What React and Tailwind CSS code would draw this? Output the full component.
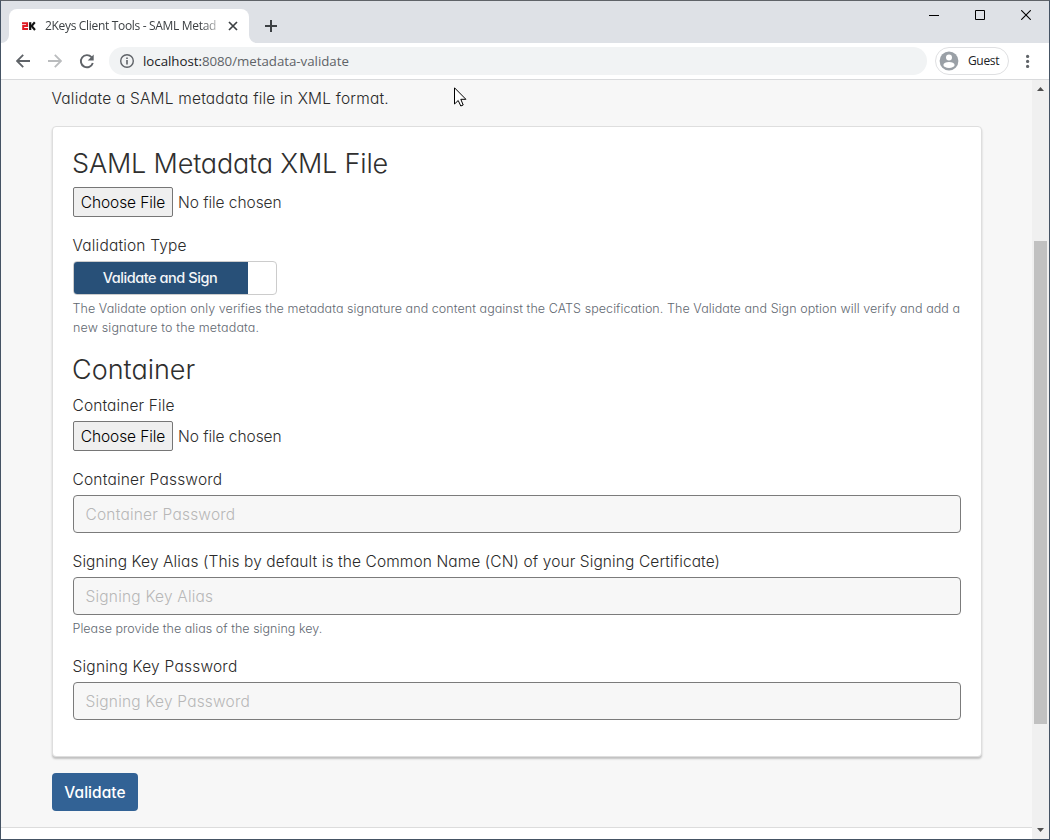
import React from "react";

const muli = "font-['Inter','Open_Sans',sans-serif] [font-feature-settings:'cv11'_1] font-light";

function Label({ children, className = "tracking-[0.19px]" }) {
  return (
    <label className={`block h-6 w-max whitespace-nowrap text-[15.5px] leading-6 -indent-[0.5px] text-[#2a2a2a] ${className}`}>
      {children}
    </label>
  );
}

function FilePicker({ className = "" }) {
  return (
    <div className={`flex h-[30px] items-center ${className}`}>
      <button className="h-[30px] w-[100px] rounded-[2px] border border-[#767676] bg-[#efefef] text-black">
        <span className="whitespace-nowrap text-[15.5px] tracking-[-0.1px]">Choose File</span>
      </button>
      <span className="ml-[5px] whitespace-nowrap pt-[2px] text-[15.5px] tracking-[-0.05px] text-[#2f2f2f]">No file chosen</span>
    </div>
  );
}

function Field({ placeholder }) {
  return (
    <div className="mt-[3px] flex h-[38px] items-center rounded border border-[#7b7b7b] bg-[#f7f7f7] pl-3">
      <span className="whitespace-nowrap pt-[2px] text-[15.5px] -indent-[0.5px] tracking-[0.2px] text-[#b8b8b8]">{placeholder}</span>
    </div>
  );
}

function TabStrip() {
  return (
    <div className="flex h-[42px] items-end justify-between bg-[#dee1e6]">
      <div className="flex h-[34px] items-end">
        <svg width="8" height="8" viewBox="0 0 8 8"><path d="M0 8A8 8 0 0 0 8 0V8Z" fill="#fff" /></svg>
        <div className="flex h-[34px] w-[240px] items-center rounded-t-lg bg-white pl-3">
          <svg width="16" height="16" viewBox="0 0 16 16" fill="none" className="shrink-0">
            <path d="M1 5.2H6.1V8H2.2V11.1H7" stroke="#e01b24" strokeWidth="2" />
            <path d="M9.2 4.2V12" stroke="#111" strokeWidth="2.2" />
            <path d="M13.8 4.2L10.6 8L14 12" stroke="#111" strokeWidth="2.1" />
          </svg>
          <span className="ml-2 w-[174px] overflow-hidden whitespace-nowrap font-['Open_Sans',sans-serif] text-[12px] leading-4 tracking-[-0.32px] text-[#3c4043] [mask-image:linear-gradient(to_right,black_156px,transparent_180px)]">
            2Keys Client Tools - SAML Metad
          </span>
          <svg width="10" height="10" viewBox="0 0 10 10" className="ml-[9px] shrink-0" stroke="#3c4043" strokeWidth="1.7">
            <path d="M1 1L9 9M9 1L1 9" />
          </svg>
        </div>
        <svg width="8" height="8" viewBox="0 0 8 8"><path d="M8 8A8 8 0 0 1 0 0V8Z" fill="#fff" /></svg>
        <svg width="12" height="12" viewBox="0 0 12 12" className="mb-[11px] ml-2" stroke="#3c4043" strokeWidth="2">
          <path d="M6 0V12M0 6H12" />
        </svg>
      </div>
      <div className="flex h-[42px] items-start gap-9 pr-[18px] pt-[9px]">
        <svg width="10" height="10" viewBox="0 0 10 10" stroke="#000"><path d="M0 5.5H10" /></svg>
        <svg width="10" height="10" viewBox="0 0 10 10" stroke="#000" fill="none"><path d="M.5 .5H9.5V9.5H.5Z" /></svg>
        <svg width="10" height="10" viewBox="0 0 10 10" stroke="#000" strokeWidth="1.1"><path d="M.2 .2L9.8 9.8M9.8 .2L.2 9.8" /></svg>
      </div>
    </div>
  );
}

function Toolbar() {
  return (
    <div className="flex h-[37px] items-center border-b border-[#d9dadc] bg-white pl-[15px] font-['Open_Sans',sans-serif]">
      <svg width="14" height="14" viewBox="0 0 14 14" fill="none" stroke="#5f6368" strokeWidth="1.8">
        <path d="M14 7H1.2M7.2 .8L1 7L7.2 13.2" />
      </svg>
      <svg width="14" height="14" viewBox="0 0 14 14" fill="none" stroke="#babcbe" strokeWidth="1.8" className="ml-[18px]">
        <path d="M0 7H12.8M6.8 .8L13 7L6.8 13.2" />
      </svg>
      <svg width="15" height="15" viewBox="-0.4 0 15 15" className="ml-[17px]">
        <path d="M12.1 3.1A6.1 6.1 0 1 0 13.4 9" fill="none" stroke="#5f6368" strokeWidth="1.9" />
        <path d="M14.3 .4V6.4H8.3Z" fill="#5f6368" />
      </svg>
      <div className="ml-[15px] flex h-7 w-[818px] items-center rounded-full bg-[#f1f3f4] pl-[11px]">
        <svg width="14" height="14" viewBox="0 0 14 14" fill="none" stroke="#5f6368" strokeWidth="1.4">
          <circle cx="7" cy="7" r="6.3" />
          <path d="M7 6.1V10.4M7 3.4V4.9" strokeWidth="1.6" />
        </svg>
        <span className="ml-[9px] whitespace-nowrap pt-px text-[13.3px] tracking-[-0.03px] text-[#5f6368]">
          <span className="text-[#202124]">localhost:</span>8080/metadata-validate
        </span>
      </div>
      <div className="ml-2 flex h-7 w-[74px] items-center rounded-full border border-[#dfe0e2] pl-[3px]">
        <svg width="20" height="20" viewBox="-0.5 -0.5 20 20">
          <circle cx="9.5" cy="9.5" r="9.4" fill="#9aa0a6" />
          <circle cx="9.5" cy="6" r="3" fill="#fff" />
          <ellipse cx="9.5" cy="13.4" rx="5.6" ry="3" fill="#fff" />
        </svg>
        <span className="ml-[9px] text-[12px] tracking-[-0.35px] text-[#202124]">Guest</span>
      </div>
      <svg width="4" height="14" viewBox="0 0 4 14" fill="#5f6368" className="ml-[17px]">
        <circle cx="1.6" cy="2.4" r="1.6" /><circle cx="1.6" cy="7.4" r="1.6" /><circle cx="1.6" cy="12.4" r="1.6" />
      </svg>
    </div>
  );
}

export default function App() {
  return (
    <div className="relative flex h-[840px] w-[1050px] flex-col overflow-hidden border border-[#455364] border-t-[#5f6368] bg-white">
      <TabStrip />
      <Toolbar />
      <div className="flex min-h-0 flex-1">
        <main className={`flex min-w-0 flex-1 flex-col bg-[#f7f7f7] ${muli}`}>
          <div className="flex h-[748px] flex-col items-start border-b border-[#dcdcdc] pl-[51px] pt-[7px]">
            <Label>Validate a SAML metadata file in XML format.</Label>
            <section className="mt-[15px] h-[631px] w-[930px] shrink-0 rounded border border-[#dedede] bg-white px-5 pt-5 shadow-[0_2px_2px_rgba(0,0,0,0.22)]">
              <h2 className="h-[34px] w-max whitespace-nowrap text-[27px] leading-[34px] -indent-[1px] tracking-[-0.17px] text-[#2f2f2f]">SAML Metadata XML File</h2>
              <FilePicker className="mt-[6px]" />
              <Label className="mt-[17px] tracking-[0.17px]">Validation Type</Label>
              <div className="mt-[3px] flex h-[34px] w-[204px] overflow-hidden rounded border border-[#ccc] bg-white">
                <div className="flex w-[174px] items-center justify-center bg-[#285078] pr-[2px] text-[14.5px] font-medium tracking-[-0.45px] text-[#f4f6f8]">
                  <span className="whitespace-nowrap">Validate and Sign</span>
                </div>
              </div>
              <p className="mt-1 h-[38px] whitespace-nowrap text-[12.5px] leading-[19px] -indent-[0.5px] tracking-[0.065px] text-[#5f6871]">
                The Validate option only verifies the metadata signature and content against the CATS specification. The Validate and Sign option will verify and add a
                <br /><span className="tracking-[0.16px]">new signature to the metadata.</span>
              </p>
              <h2 className="mt-4 h-[34px] w-max text-[27px] leading-[34px] -indent-[1px] text-[#2f2f2f]">Container</h2>
              <Label className="mt-[7px] tracking-[0.12px]">Container File</Label>
              <FilePicker className="mt-[3px]" />
              <Label className="mt-[17px] tracking-[0.2px]">Container Password</Label>
              <Field placeholder="Container Password" />
              <Label className="mt-[17px] tracking-[0.1px]">Signing Key Alias (This by default is the Common Name (CN) of your Signing Certificate)</Label>
              <Field placeholder="Signing Key Alias" />
              <p className="mt-1 h-[19px] w-max text-[12.5px] leading-[19px] -indent-[0.5px] tracking-[0.03px] text-[#5f6871]">Please provide the alias of the signing key.</p>
              <Label className="mt-[17px] tracking-[0.22px]">Signing Key Password</Label>
              <Field placeholder="Signing Key Password" />
            </section>
            <button className="mt-4 h-[38px] w-[86px] shrink-0 rounded bg-[#326295] pt-[2px] text-[15.5px] font-medium tracking-[0.05px] text-white">Validate</button>
          </div>
          <div className="flex-1 bg-white" />
        </main>
        <div className="flex w-[17px] flex-col items-center bg-[#f0f0f0]">
          <svg width="7" height="4" viewBox="0 0 7 4" className="mt-[7px]" fill="#505050"><path d="M3.5 0L7 4H0Z" /></svg>
          <div className="mt-[150px] h-[483px] w-[13px] bg-[#c1c1c1]" />
          <svg width="7" height="4" viewBox="0 0 7 4" className="mt-auto mb-[7px]" fill="#505050"><path d="M3.5 4L7 0H0Z" /></svg>
        </div>
      </div>
      <svg width="13" height="20" viewBox="0 0 13 20" className="absolute left-[453px] top-[86px]" fill="#fff" stroke="#000">
        <path d="M.5 .8V17L4.2 13.5L6.8 19L9.2 18L6.8 12.3H11.9Z" />
      </svg>
    </div>
  );
}
